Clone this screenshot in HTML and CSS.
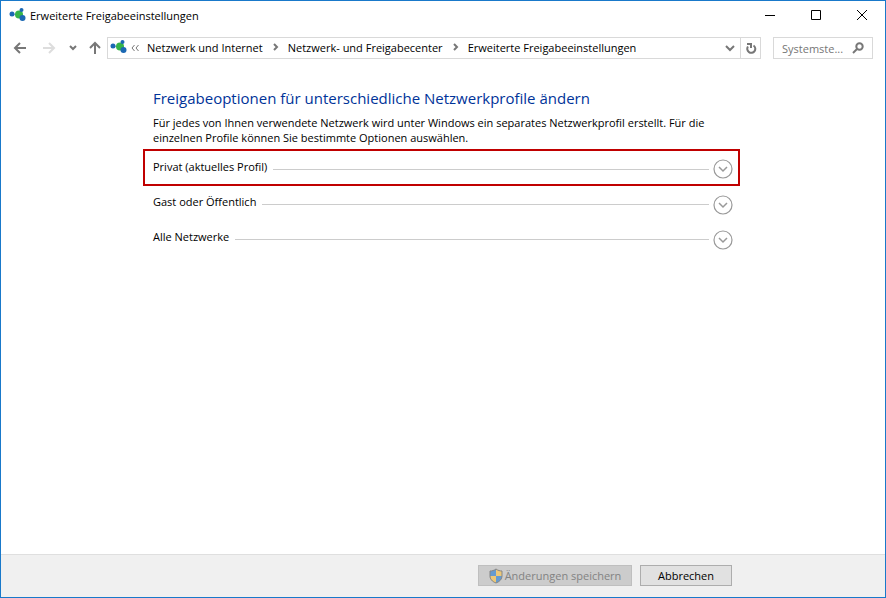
FILE: index.html
```html
<!DOCTYPE html>
<html lang="de">
<head>
    <meta charset="utf-8">
    <title>Erweiterte Freigabeeinstellungen</title>
    <link rel="stylesheet" href="styles.css">
</head>
<body>
    <svg class="defs" aria-hidden="true">
        <symbol id="network" viewBox="0 0 17 15">
            <path d="M3 6L10 7L12 3M10 8L13 10" stroke="#8fb4cf" fill="none"/>
            <circle cx="10" cy="6.500" r="4" fill="#35b44a"/>
            <circle cx="3" cy="6" r="2.500" fill="#1b68b3"/>
            <circle cx="12.500" cy="2" r="2" fill="#1b68b3"/>
            <circle cx="13.500" cy="10" r="3" fill="#1b68b3"/>
        </symbol>
        <symbol id="expand" viewBox="0 0 20 20">
            <circle cx="10" cy="10" r="9" fill="#fff" stroke="#999" stroke-width="1.200"/>
            <path d="M6 8L10 12L14 8" fill="none" stroke="#999" stroke-width="1.500"/>
        </symbol>
    </svg>
    <div class="window">
        <header class="titlebar">
            <svg class="network-icon"><use href="#network"/></svg>
            <h1>Erweiterte Freigabeeinstellungen</h1>
            <div class="controls">
                <button type="button" aria-label="Minimieren"><svg viewBox="0 0 12 12"><path d="M1 6.500H11"/></svg></button>
                <button type="button" aria-label="Maximieren"><svg viewBox="0 0 12 12"><path d="M1.500 1.500H10.500V10.500H1.500Z"/></svg></button>
                <button type="button" aria-label="Schließen"><svg viewBox="0 0 12 12"><path d="M1 1L11 11M11 1L1 11"/></svg></button>
            </div>
        </header>
        <nav class="navbar">
            <div class="history">
                <button type="button" class="back" aria-label="Zurück"><svg viewBox="0 0 14 14"><path d="M13 7H2M7 2L2 7L7 12"/></svg></button>
                <button type="button" class="forward" aria-label="Vorwärts" disabled><svg viewBox="0 0 14 14"><path d="M1 7H12M7 2L12 7L7 12"/></svg></button>
                <button type="button" class="recent" aria-label="Verlauf"><svg viewBox="0 0 8 8"><path d="M1 2L4 5L7 2"/></svg></button>
                <button type="button" class="up" aria-label="Nach oben"><svg viewBox="0 0 14 14"><path d="M7 13V2M2 7L7 2L12 7"/></svg></button>
            </div>
            <div class="address">
                <svg class="network-icon"><use href="#network"/></svg>
                <svg class="crumb-more" viewBox="0 0 8 8"><path d="M3.500 1L1 4L3.500 7M7.500 1L5 4L7.500 7"/></svg>
                <a href="#">Netzwerk und Internet</a>
                <svg class="crumb-sep" viewBox="0 0 6 8"><path d="M1 1L4 4L1 7"/></svg>
                <a href="#">Netzwerk- und Freigabecenter</a>
                <svg class="crumb-sep" viewBox="0 0 6 8"><path d="M1 1L4 4L1 7"/></svg>
                <a href="#">Erweiterte Freigabeeinstellungen</a>
                <button type="button" class="dropdown" aria-label="Vorherige Orte"><svg viewBox="0 0 10 10"><path d="M1 3L5 7L9 3"/></svg></button>
                <button type="button" class="refresh" aria-label="Aktualisieren"><svg viewBox="0 0 12 12"><path d="M8.500 3.500A4 4 0 1 1 3 4.500M2 2H6V6"/></svg></button>
            </div>
            <div class="search">
                <input type="text" aria-label="Suchen" placeholder="Systemste...">
                <svg viewBox="0 0 12 12"><circle cx="7.500" cy="4.500" r="3.200"/><path d="M5 7L1 11"/></svg>
            </div>
        </nav>
        <main>
            <h2>Freigabeoptionen für unterschiedliche Netzwerkprofile ändern</h2>
            <p>Für jedes von Ihnen verwendete Netzwerk wird unter Windows ein separates Netzwerkprofil erstellt. Für die einzelnen Profile können Sie bestimmte Optionen auswählen.</p>
            <div class="profiles">
                <button type="button" class="profile marked" aria-expanded="false">
                    <span>Privat (aktuelles Profil)</span><i></i><svg><use href="#expand"/></svg>
                </button>
                <button type="button" class="profile" aria-expanded="false">
                    <span>Gast oder Öffentlich</span><i></i><svg><use href="#expand"/></svg>
                </button>
                <button type="button" class="profile" aria-expanded="false">
                    <span>Alle Netzwerke</span><i></i><svg><use href="#expand"/></svg>
                </button>
            </div>
        </main>
        <footer>
            <div class="actions">
                <button type="button" class="save" disabled>
                    <svg viewBox="0 0 14 16">
                        <path d="M7 1C5 2.500 3 3 1 3V8C1 11 3 13.500 7 15Z" fill="#659bd0"/>
                        <path d="M7 1C9 2.500 11 3 13 3V8C13 11 11 13.500 7 15Z" fill="#ecc878"/>
                        <path d="M1 8H7V15C3 13.500 1 11 1 8Z" fill="#ecc878"/>
                        <path d="M7 8H13C13 11 11 13.500 7 15Z" fill="#659bd0"/>
                        <path d="M7 1C5 2.500 3 3 1 3V8C1 11 3 13.500 7 15C11 13.500 13 11 13 8V3C11 3 9 2.500 7 1Z" fill="none" stroke="#858585"/>
                    </svg>
                    <span>Änderungen speichern</span>
                </button>
                <button type="button" class="cancel">Abbrechen</button>
            </div>
        </footer>
    </div>
</body>
</html>
```

FILE: styles.css
```css
*{
    box-sizing: border-box;
}
body{
    margin: 0;
    font-family: "Open Sans", "Noto Sans", sans-serif;
    font-size: 11px;
    line-height: 15px;
    color: #000;
    background: #fff;
}
button, input{
    font: inherit;
    color: inherit;
    margin: 0;
    padding: 0;
    border: 0;
    background: none;
}
svg{
    display: block;
    flex: none;
    fill: none;
}
.defs{
    position: absolute;
    width: 0;
    height: 0;
}
.window{
    display: flex;
    flex-direction: column;
    min-height: 100vh;
    border: 1px solid #1979ca;
}
/* Title bar */
.titlebar{
    display: flex;
    align-items: center;
    height: 30px;
    padding: 0 0 2px 8px;
    gap: 4px;
}
.network-icon{
    width: 17px;
    height: 15px;
}
h1{
    margin: 0;
    font-size: 11px;
    font-weight: normal;
}
.controls{
    display: flex;
    align-self: flex-start;
    margin-left: auto;
}
.controls button{
    display: grid;
    place-items: center;
    width: 46px;
    height: 28px;
}
.controls svg{
    width: 12px;
    height: 12px;
    stroke: #000;
}
/* Navigation bar */
.navbar{
    display: flex;
    align-items: center;
    height: 34px;
    padding: 0 12px;
}
.history{
    display: flex;
    align-items: center;
    width: 94px;
    gap: 15px;
}
.history svg{
    width: 14px;
    height: 14px;
    stroke: #777;
    stroke-width: 2;
}
.history .forward svg{
    stroke: #ddd;
}
.history .recent svg{
    width: 8px;
    height: 8px;
}
.history .recent{
    margin: 0 -4px 0 -2px;
}
.address{
    display: flex;
    flex: 1;
    align-items: center;
    height: 22px;
    padding: 0 0 2px 2px;
    border: 1px solid #d9d9d9;
}
.address a{
    color: #000;
    text-decoration: none;
    white-space: nowrap;
}
.crumb-more{
    width: 8px;
    height: 8px;
    margin: 2px 8px 0 4px;
    stroke: #777;
}
.crumb-sep{
    width: 6px;
    height: 8px;
    margin: 0 9px 0 10px;
    stroke: #777;
    stroke-width: 2;
}
.address button{
    display: grid;
    place-items: center;
    align-self: flex-start;
    width: 20px;
    height: 20px;
}
.address button svg{
    width: 10px;
    height: 10px;
    stroke: #777;
    stroke-width: 2;
}
.address .dropdown{
    margin-left: auto;
}
.address .refresh{
    border-left: 1px solid #d9d9d9;
}
.address .refresh svg{
    width: 12px;
    height: 12px;
}
.search{
    display: flex;
    align-items: center;
    width: 100px;
    height: 22px;
    margin-left: 12px;
    padding: 0 8px;
    border: 1px solid #d9d9d9;
}
.search input{
    flex: 1;
    min-width: 0;
    outline: 0;
}
.search input::placeholder{
    color: #767676;
    opacity: 1;
}
.search svg{
    width: 12px;
    height: 12px;
    stroke: #777;
    stroke-width: 2;
}
/* Content */
main{
    flex: 1;
    width: 100%;
    max-width: 580px;
    margin: 0 auto;
    padding-top: 23px;
}
h2{
    margin: 0 0 7px;
    font-size: 15px;
    line-height: 20px;
    font-weight: normal;
    color: #003399;
}
p{
    margin: 0;
}
.profiles{
    margin: 4px -7px 0 -10px;
}
.profile{
    display: flex;
    align-items: center;
    width: 100%;
    height: 35px;
    padding: 2px 7px 0 10px;
}
.marked{
    height: 37px;
    padding: 3px 5px 0 8px;
    border: 2px solid #c00000;
}
.profile span{
    margin-bottom: 6px;
}
.profile i{
    flex: 1;
    height: 1px;
    margin: 0 4px 0 6px;
    background: #ccc;
}
.profile svg{
    width: 20px;
    height: 20px;
}
/* Footer */
footer{
    height: 43px;
    padding-top: 10px;
    border-top: 1px solid #dfdfdf;
    background: #f0f0f0;
}
.actions{
    display: flex;
    justify-content: flex-end;
    gap: 8px;
    max-width: 578px;
    margin: 0 auto;
}
.actions button{
    display: flex;
    align-items: center;
    justify-content: center;
    height: 21px;
    border: 1px solid #adadad;
    background: #e1e1e1;
}
.actions .save{
    width: 154px;
    gap: 2px;
    color: #838383;
    border-color: #bfbfbf;
    background: #ccc;
}
.save svg{
    width: 14px;
    height: 16px;
}
.actions .cancel{
    width: 92px;
}
```
